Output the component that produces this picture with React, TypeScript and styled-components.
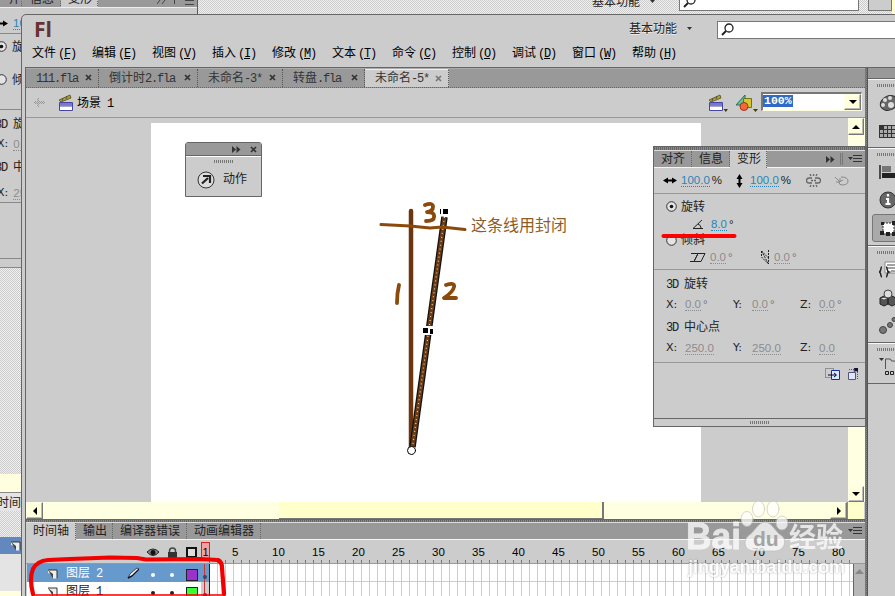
import React from "react";
import styled, { createGlobalStyle, css } from "styled-components";

const Global = createGlobalStyle`
  * { box-sizing: border-box; }
  body { margin: 0; overflow: hidden; }
  svg { display: block; flex: none; }
`;

const hatch = css`
  background-color: #ccc;
  background-image: conic-gradient(#f0f0f0 25%, transparent 0 50%, #f0f0f0 0 75%, transparent 0);
  background-size: 2px 2px;
`;
const hatchYellow = css`
  background-color: #ffffe2;
`;
const dotsDark = css`
  background: repeating-linear-gradient(90deg, #666 0 1px, #8a8a8a 1px 2px);
`;

const Page = styled.div`
  position: relative;
  width: 895px;
  height: 596px;
  overflow: hidden;
  background: #ccc;
  color: #222;
  font: 12px/16px "Noto Sans CJK SC", sans-serif;
  white-space: nowrap;
`;

/* ---------- text helpers ---------- */
const Latin = styled.span`
  font-family: "Liberation Mono", monospace;
  font-size: 12px;
  letter-spacing: -1.2px;
`;
const Mixed = ({ text }: { text: string }) => (
  <span>
    {text.split(/([\x20-\x7e]+)/).map((s, i) => (/^[\x20-\x7e]+$/.test(s) ? <Latin key={i}>{s}</Latin> : s))}
  </span>
);

/* ---------- window behind ---------- */
const BackTop = styled.div`
  position: absolute;
  inset: 0 0 auto 0;
  height: 15px;
  display: flex;
  ${hatch}
`;
const BackPanelTop = styled.div`
  width: 198px;
  flex: none;
  background: #ccc;
  border-right: 1px solid #557;
`;
const BackTabs = styled.div`
  height: 8px;
  display: flex;
  overflow: hidden;
  background: #999;
  border-bottom: 1px solid #eee;
`;
const BackTab = styled.span<{ $w: number; $on?: boolean }>`
  width: ${(p) => p.$w}px;
  height: 18px;
  margin-top: -10px;
  padding-left: ${(p) => (p.$on ? 7 : 8)}px;
  background: ${(p) => (p.$on ? "#ccc" : "none")};
  border-right: 1px dotted #666;
`;
const BackMark = styled.svg`margin-left: 59px;`;
const BackWork = styled.div`
  display: flex;
  width: 303px;
  margin-left: auto;
`;
const BackTitle = styled.span`
  width: 87px;
  flex: none;
  display: flex;
  align-items: center;
  gap: 10px;
  height: 16px;
  margin-top: -7px;
`;
const BackBox = styled.div<{ $w: number; $ml: number; $c: string }>`
  width: ${(p) => p.$w}px;
  flex: none;
  margin-left: ${(p) => p.$ml}px;
  height: 11px;
  padding-left: 3px;
  background: ${(p) => p.$c};
  border: 1px solid #777;
  border-top: 0;
  svg { margin-top: -5px; }
`;
const BackTip = styled.div`
  width: 6px;
  margin-left: auto;
  background: #ffffcc;
`;
const BackLeft = styled.div`
  position: absolute;
  left: 0;
  top: 13px;
  width: 22px;
  height: 583px;
  overflow: hidden;
  display: flex;
  flex-direction: column;
  background: #ccc;
`;
const Strip = styled.div<{ $h: number; $line?: boolean; $bg?: "hatch" | "yellow" | "blue" | "light"; $shift?: number }>`
  height: ${(p) => p.$h}px;
  flex: none;
  display: flex;
  align-items: center;
  gap: 5px;
  border-bottom: ${(p) => (p.$line ? "1px solid #888" : "0")};
  > :first-child { margin-left: ${(p) => p.$shift ?? 0}px; }
  ${(p) => p.$bg === "hatch" && hatch}
  ${(p) => p.$bg === "yellow" && "background: #ffffe0;"}
  ${(p) => p.$bg === "blue" && "background: #6288bd;"}
  ${(p) => p.$bg === "light" && "background: #e4e4e4;"}
`;

/* ---------- front window ---------- */
const Window = styled.div`
  position: absolute;
  left: 21px;
  top: 14px;
  width: 880px;
  height: 590px;
  background: #ccc;
  border: 1px solid #666;
  border-radius: 5px 0 0 0;
  display: flex;
  flex-direction: column;
`;
const TitleRow = styled.div`
  height: 29px;
  display: flex;
  align-items: center;
  padding-left: 12px;
`;
const Logo = styled.span`
  width: 595px;
  flex: none;
  color: #663333;
  font: 700 21px/27px "Open Sans", sans-serif;
`;
const Workspace = styled.span`
  width: 88px;
  flex: none;
  padding-bottom: 3px;
  display: flex;
  align-items: center;
  gap: 10px;
  text-shadow: 0 1px #eee;
`;
const Search = styled.div`
  width: 190px;
  flex: none;
  height: 18px;
  margin-top: 1px;
  padding-left: 3px;
  display: flex;
  align-items: center;
  background: #fff;
  border: 1px solid #777;
`;
const Menu = styled.div`
  height: 23px;
  padding: 0 0 6px 10px;
  display: grid;
  grid-template-columns: repeat(11, 60px);
  align-items: center;
  color: #000;
`;
const Key = styled(Latin)`
  margin-left: 2px;
  u { text-underline-offset: 1px; }
`;
const Body = styled.div`
  flex: 1;
  display: flex;
  margin-left: 3px;
  border-left: 1px solid #666;
  border-top: 1px solid #666;
`;
const Center = styled.div`
  width: 839px;
  flex: none;
  display: flex;
  flex-direction: column;
`;
const Divider = styled.div`
  width: 3px;
  flex: none;
  background: repeating-linear-gradient(0deg, #666 0 1px, #888 1px 2px);
  border-right: 1px solid #555;
  border-left: 1px solid #777;
`;
const DocTabs = styled.div`
  height: 20px;
  display: flex;
  background: #999;
  border-top: 1px solid #aaa;
  border-bottom: 1px dotted #666;
`;
const DocTab = styled.div<{ $w: number; $on?: boolean }>`
  width: ${(p) => p.$w}px;
  padding: 0 6px 1px 10px;
  display: flex;
  align-items: center;
  justify-content: space-between;
  background: ${(p) => (p.$on ? "#ccc" : "#999")};
  border-right: 1px dotted #555;
  border-top: ${(p) => (p.$on ? "1px solid #eee" : "0")};
  color: #333;
`;
const EditBar = styled.div`
  height: 30px;
  padding: 0 3px 0 7px;
  display: flex;
  align-items: center;
  border-bottom: 1px solid #999;
  color: #000;
`;
const SceneName = styled.span`
  flex: 1;
  margin-left: 3px;
`;
const EditIcons = styled.div`
  display: flex;
  gap: 7px;
  margin-right: 3px;
`;
const Zoom = styled.div`
  width: 101px;
  height: 19px;
  margin-top: -3px;
  display: flex;
  justify-content: space-between;
  background: #fff;
  border: 2px solid #777;
  border-right: 1px solid #ffd;
  border-bottom: 1px solid #ffd;
`;
const ZoomValue = styled.span`
  height: 12px;
  margin-top: 1px;
  padding: 0 1px;
  background: #316ac5;
  color: #fff;
  font: 700 11.5px/12px "Liberation Mono", monospace;
`;
const Btn = styled.div<{ $w?: number; $h?: number }>`
  width: ${(p) => p.$w ?? 17}px;
  height: ${(p) => p.$h ?? 17}px;
  flex: none;
  display: flex;
  align-items: center;
  justify-content: center;
  background: #ffffdc;
  border: 1px solid #ffffe8;
  border-right: 1px solid #777;
  border-bottom: 1px solid #777;
  box-shadow: inset -1px -1px #bbb;
`;
const CanvasRow = styled.div`
  height: 384px;
  display: flex;
`;
const Pasteboard = styled.div`
  width: 822px;
  padding: 5px 147px 0 125px;
`;
const Stage = styled.div`
  height: 379px;
  background: #fff;
`;
const VScroll = styled.div`
  width: 17px;
  display: flex;
  flex-direction: column;
  justify-content: space-between;
  ${hatchYellow}
`;
const HScroll = styled.div`
  height: 17px;
  display: flex;
  width: 838px;
  ${hatchYellow}
`;
const Track = styled.div<{ $w: number }>`
  width: ${(p) => p.$w}px;
  flex: none;
`;
const Thumb = styled.div`
  width: 325px;
  flex: none;
  background: #ffffcc;
  border-right: 2px solid #777;
  border-bottom: 1px solid #777;
`;
const Corner = styled.div`
  width: 17px;
  background: #ffffcc;
  border-left: 1px solid #888;
`;
const Splitter = styled.div`
  height: 4px;
  ${dotsDark}
  border-top: 1px solid #666;
  border-bottom: 1px solid #ddd;
`;
const PaneTabs = styled.div`
  height: 17px;
  display: flex;
  background: #999;
  border-bottom: 1px solid #f4f4f4;
`;
const PaneTab = styled.div<{ $w: number; $on?: boolean }>`
  width: ${(p) => p.$w}px;
  height: ${(p) => (p.$on ? 17 : 16)}px;
  padding-left: 7px;
  line-height: 13px;
  background: ${(p) => (p.$on ? "#ccc" : "#999")};
  border-right: 1px dotted #666;
  color: #222;
`;
const TabMenu = styled.div`
  display: flex;
  align-items: center;
  gap: 5px;
  margin: 0 3px 0 auto;
`;
const Ruler = styled.div`
  height: 24px;
  display: flex;
  overflow: hidden;
  border-bottom: 1px solid #999;
  color: #000;
  background: #ccc;
`;
const LayerHead = styled.div`
  width: 175px;
  flex: none;
  padding: 2px 4px 0 0;
  display: flex;
  align-items: center;
  justify-content: flex-end;
  gap: 8px;
`;
const RulerScale = styled.div`
  flex: none;
  display: flex;
  width: 664px;
  background: repeating-linear-gradient(90deg, transparent 0 7px, #777 7px 8px) 1px 100% / 648px 3px no-repeat;
`;
const PlayHead = styled.div`
  width: 9px;
  height: 18px;
  flex: none;
  margin: 2px 22px 0 0;
  background: #f3a0a0;
  border: 1px solid #d22;
  text-align: center;
  font: 11px/19px "Liberation Sans", sans-serif;
`;
const Mark = styled.span`
  width: 40px;
  flex: none;
  padding-top: 4px;
  font: 11.5px/16px "Liberation Sans", sans-serif;
`;
const LayerRow = styled.div<{ $h: number }>`
  height: ${(p) => p.$h}px;
  display: flex;
`;
const LayerInfo = styled.div<{ $on?: boolean }>`
  width: 174px;
  margin-left: 1px;
  padding: 0 5px 2px 21px;
  display: grid;
  grid-template-columns: 18px 61px 21px 19px 19px 12px;
  align-items: center;
  background: ${(p) => (p.$on ? "#6699cc" : "#fff")};
  color: ${(p) => (p.$on ? "#fff" : "#222")};
`;
const Dot = styled.i`
  width: 4px;
  height: 4px;
  margin: 3px 0 0 3px;
  border-radius: 2px;
  background: currentColor;
`;
const Swatch = styled.i<{ $c: string }>`
  width: 12px;
  height: 12px;
  margin-top: 3px;
  border: 1px solid #222;
  background: ${(p) => p.$c};
`;
const KeyFrame = styled.div<{ $on?: boolean }>`
  width: 9px;
  padding: 4px 2px 0 0;
  background: linear-gradient(90deg, transparent 3px, #c33 3px 4px, transparent 4px), ${(p) => (p.$on ? "#6699cc" : "#ccc")};
  border-right: 1px solid #222;
  display: flex;
  align-items: center;
  justify-content: center;
  color: #446;
  i { flex: none; margin: 3px 0 0 2px; }
`;
const Frames = styled.div`
  width: 643px;
  background: repeating-linear-gradient(90deg, #fff 0 7px, #ccc 7px 8px);
  border-bottom: 1px solid #ccc;
`;
const FrameScroll = styled.div`
  width: 12px;
  padding: 4px 1px;
  background: #b8b8b8;
  border-left: 1px solid #666;
`;

/* ---------- dock ---------- */
const Dock = styled.div`
  width: 40px;
  display: flex;
  flex-direction: column;
`;
const DockHead = styled.div`
  height: 11px;
  background: #999;
  border-bottom: 1px solid #666;
`;
const DockGroup = styled.div<{ $h: number }>`
  height: ${(p) => p.$h}px;
  padding: 4px 0 0 9px;
  border-top: 1px solid #f8f8f8;
  border-bottom: 1px solid #666;
`;
const Grip = styled.div<{ $w?: number }>`
  width: ${(p) => p.$w ?? 20}px;
  height: 3px;
  background: repeating-linear-gradient(90deg, #777 0 1px, transparent 1px 2px);
`;
const DockItems = styled.div`
  padding-top: 2px;
`;
const DockItem = styled.div<{ $on?: boolean }>`
  height: 28px;
  margin-left: -5px;
  padding-left: 6px;
  display: flex;
  align-items: center;
  border-radius: 3px 0 0 3px;
  border: ${(p) => (p.$on ? "1px solid #777" : "1px solid transparent")};
  background: ${(p) => (p.$on ? "#aaa" : "none")};
`;

/* ---------- floating panels ---------- */
const ActionPanel = styled.div`
  position: absolute;
  left: 185px;
  top: 142px;
  width: 77px;
  height: 55px;
  background: #ccc;
  border: 1px solid #666;
  border-radius: 3px 3px 0 0;
`;
const ActionHead = styled.div`
  height: 14px;
  padding-right: 4px;
  display: flex;
  align-items: center;
  justify-content: flex-end;
  gap: 9px;
  background: #999;
  border-bottom: 1px solid #fff;
  box-shadow: 0 -1px #666 inset;
`;
const ActionGrip = styled(Grip)`margin: 3px auto 0;`;
const ActionBody = styled.div`
  padding: 7px 0 0 11px;
  display: flex;
  align-items: center;
  gap: 8px;
`;
const ActionLabel = styled.span`
  padding-bottom: 3px;
`;
const Transform = styled.div`
  position: absolute;
  left: 653px;
  top: 146px;
  width: 214px;
  height: 281px;
  background: #ccc;
  border: 1px solid #666;
  border-right-width: 2px;
  display: flex;
  flex-direction: column;
`;
const TransformBar = styled.div`
  height: 4px;
  flex: none;
  ${dotsDark}
  border-bottom: 1px solid #ddd;
`;
const Section = styled.div<{ $h: number }>`
  height: ${(p) => p.$h}px;
  flex: none;
  border-bottom: 1px solid #999;
`;
const Row = styled.div<{ $h: number; $pl?: number }>`
  height: ${(p) => p.$h}px;
  padding-left: ${(p) => p.$pl ?? 12}px;
  display: flex;
  align-items: center;
  gap: 4px;
`;
const Label = styled.span`
  padding-bottom: 2px;
`;
const Num = styled.span<{ $off?: boolean; $w?: number }>`
  display: flex;
  gap: 2px;
  width: ${(p) => (p.$w ? p.$w + "px" : "auto")};
  font: 11.5px/12px "Liberation Sans", sans-serif;
  color: ${(p) => (p.$off ? "#777" : "#222")};
  b {
    font-weight: 400;
    color: ${(p) => (p.$off ? "#8c8c8c" : "#2b84b5")};
    border-bottom: 1px dotted currentColor;
  }
`;
const Axis = styled.span`
  width: 15px;
  font: 11px/12px "DejaVu Sans", sans-serif;
`;
const PanelTools = styled.div`
  height: 55px;
  padding: 5px 6px 0 0;
  display: flex;
  justify-content: flex-end;
  gap: 8px;
`;
const PanelFoot = styled.div`
  height: 8px;
  display: flex;
  align-items: center;
  justify-content: center;
  border-top: 1px solid #666;
`;

/* ---------- overlays ---------- */
const Overlay = styled.svg`
  position: absolute;
  left: 0;
  top: 0;
  pointer-events: none;
`;
const SiteName = styled.text`
  font: 700 19px "Liberation Sans", sans-serif;
  stroke: none;
  filter: drop-shadow(0 0 1px #999);
`;
const Caption = styled.span`
  position: absolute;
  left: 471px;
  top: 213px;
  font: 400 16px/22px "Noto Sans CJK SC", sans-serif;
  color: #8e5c24;
`;

/* ---------- icons ---------- */
const Tri = ({ d }: { d: "up" | "down" | "left" | "right" }) => (
  <svg width="8" height="8" viewBox="0 0 8 8" fill="#000">
    <path d={{ up: "M0 6 4 2 8 6Z", down: "M0 2h8L4 6Z", left: "M6 0v8L2 4Z", right: "M2 0v8L6 4Z" }[d]} />
  </svg>
);
const Small = () => <svg width="5" height="3" viewBox="0 0 5 3"><path d="M0 0h5L2.5 3Z" fill="#333" /></svg>;
const Close = ({ on = false }: { on?: boolean }) => (
  <svg width="7" height="7" viewBox="0 0 7 7" stroke={on ? "#777" : "#333"} strokeWidth="1.7"><path d="M1 1 6 6M6 1 1 6" /></svg>
);
const Glass = () => (
  <svg width="14" height="14" viewBox="0 0 14 14" fill="none" stroke="#222" strokeWidth="1.3">
    <circle cx="8" cy="5" r="4" /><path d="M5 8 1 12" strokeWidth="2" />
  </svg>
);
const MenuIcon = () => (
  <svg width="14" height="8" viewBox="0 0 14 8"><path d="M0 2h5L2.5 5Z" fill="#333" /><path d="M5 .5h9M5 3.5h9M5 6.5h9" stroke="#333" /></svg>
);
const FF = () => <svg width="9" height="7" viewBox="0 0 9 7" fill="#333"><path d="M0 0 4 3.500 0 7ZM4.500 0 8.500 3.500 4.500 7Z" /></svg>;
const Clapper = ({ drop = false }: { drop?: boolean }) => (
  <svg width={drop ? 20 : 16} height="18" viewBox={`0 0 ${drop ? 20 : 16} 18`}>
    <path d="M1 6 12 1l1 3L3 8Z" fill="#aaa035" stroke="#554f10" strokeWidth=".8" />
    <path d="m4 7 1-3m3 1 1-3" stroke="#554" />
    <path d="M1.500 8.500h13v8h-13z" fill="#fff" stroke="#4646a0" /><path d="M2 9h12v2.500H2z" fill="#7777d0" />
    <path d="M2 12h12" stroke="#4646a0" />
    {drop && <path d="M15.500 15h4.500l-2.200 3Z" fill="#443c00" />}
  </svg>
);
const Symbols = () => (
  <svg width="23" height="18" viewBox="0 0 23 18">
    <path d="M1 11 10 1v10Z" fill="#5fc59b" stroke="#22705a" />
    <path d="M8.500 4.500h8v9h-8z" fill="#d4c92c" stroke="#77701a" /><circle cx="9" cy="12.500" r="4" fill="#f26a39" stroke="#a4301b" />
    <path d="M18 15h5l-2.500 3Z" fill="#443c00" />
  </svg>
);
const Back = () => (
  <svg width="13" height="11" viewBox="0 0 13 11" fill="none" stroke="#999" strokeDasharray="1 1"><path d="M1 5.500h11M2 4.500h9M2 6.500h9M5.500 1v9M4.500 2v7" /></svg>
);
const Radio = ({ on = false }: { on?: boolean }) => (
  <svg width="11" height="11" viewBox="0 0 11 11"><circle cx="5.500" cy="5.500" r="4.800" fill="#e4e4e4" stroke="#333" />{on && <circle cx="5.500" cy="5.500" r="1.800" fill="#111" />}</svg>
);
const LayerIcon = () => (
  <svg width="11" height="11" viewBox="0 0 11 11"><path d="M0 2H9V10.500H5L4 6 0 5Z" fill="#eee" /><path d="M0 2h9v8.500" fill="none" stroke="#333" /><path d="M0 2l5 8.500V6Z" fill="#444" /></svg>
);
const Pencil = () => <svg width="12" height="12" viewBox="0 0 12 12"><path d="M1 11 3 7 10 1l2 1-7 7Z" fill="#fff" stroke="#223" strokeWidth=".8" /><path d="m1 11 4-2L12 2" stroke="#112" strokeWidth="1.400" fill="none" /></svg>;

const Arrow = ({ v = false }: { v?: boolean }) => (
  <svg width={v ? 7 : 14} height={v ? 14 : 7} viewBox={v ? "0 0 7 14" : "0 0 14 7"} fill="#000">
    <path d={v ? "M3.500 0 6.500 5H4.500v4h2l-3 5L.5 9h2V5h-2Z" : "M0 3.500 5 .5v2h4v-2l5 3L9 6.500v-2H5v2Z"} />
  </svg>
);
const dockIcons: Record<string, React.ReactNode> = {
  palette: <><ellipse cx="10" cy="9" rx="9" ry="7" fill="#666" stroke="#333" transform="rotate(-25 10 9)" /><g fill="#ddd"><circle cx="6" cy="6" r="2" /><circle cx="11" cy="4" r="2" /><circle cx="4" cy="11" r="2" /><circle cx="12" cy="11" r="3" /></g></>,
  grid: <><path d="M0 3h20v13H0z" fill="#333" /><path d="M5 4h3v3H5zm4 0h3v3H9zm4 0h3v3h-3zM1 8h3v3H1zm4 0h3v3H5zm4 0h3v3H9zm4 0h3v3h-3zM1 12h3v3H1zm4 0h3v3H5zm4 0h3v3H9zm4 0h3v3h-3z" fill="#aaa" /></>,
  align: <><path d="M1 2v14" stroke="#222" strokeWidth="1.500" /><path d="M3 3h9v6H3z" fill="#777" /><path d="M3 10h17v5H3z" fill="#222" /></>,
  info: <><circle cx="9" cy="9" r="8" fill="#666" stroke="#333" /><path d="M9 3v2.500M7 8h2v5m-2.500 0h5" stroke="#fff" strokeWidth="2.200" /></>,
  transform: <><path d="M4 4h11v11H4z" fill="#fff" stroke="#333" strokeDasharray="2 1" /><path d="M1 12h4v4H1zM7 13h4v4H7zM13 2h4v4h-4zm0 11h4v4h-4zM2 3h3v3H2z" fill="#222" /></>,
  code: <><path d="M6 1h14v11H6z" fill="#fff" stroke="#888" /><path d="M8 4h11M8 7h11M12 10h7" stroke="#444" /><path d="M3 6C1 6 3 10 0 11c3 1 1 5 3 5M7 6c2 0 0 4 3 5-3 1-1 5-3 5" stroke="#222" strokeWidth="1.500" fill="none" /></>,
  cubes: <><path d="M1 9l4-2 4 2v6l-4 2-4-2ZM9 9l4-2 4 2v6l-4 2-4-2Z" fill="#555" stroke="#222" /><circle cx="9" cy="5" r="4" fill="#ddd" stroke="#444" /><path d="m2 9 3 1.500L8 9" fill="#eee" /></>,
  motion: <><g fill="#777" stroke="#444"><circle cx="4" cy="13" r="3.500" /><circle cx="11" cy="8" r="2.500" /><circle cx="15" cy="2.500" r="2" /></g></>,
  folder: <><path d="M0 0h5L2.500 3Z" fill="#333" /><path d="M6.500 11V1h5l1 2H20" fill="none" stroke="#555" /><path d="M6.500 13.500h3v3h-3zm5 0h3v3h-3zm5 0h3v3h-3z" fill="none" stroke="#222" /></>,
};
const DockIcon = ({ n }: { n: string }) => <svg width="20" height="19" viewBox="0 0 20 19">{dockIcons[n]}</svg>;

const menus = [["文件", "F"], ["编辑", "E"], ["视图", "V"], ["插入", "I"], ["修改", "M"], ["文本", "T"], ["命令", "C"], ["控制", "O"], ["调试", "D"], ["窗口", "W"], ["帮助", "H"]];
const docs: [string, number][] = [["111.fla", 73], ["倒计时2.fla", 99], ["未命名-3*", 85], ["转盘.fla", 82], ["未命名-5*", 84]];
const dock: { h: number; items: string[] }[] = [
  { h: 69, items: ["palette", "grid"] }, { h: 98, items: ["align", "info", "transform"] },
  { h: 97, items: ["code", "cubes", "motion"] }, { h: 41, items: ["folder"] },
];

const Deg = ({ v, w }: { v: string; w?: number }) => <Num $off $w={w}><b>{v}</b>°</Num>;

export default function App() {
  return (
    <Page>
      <Global />
      <BackTop>
        <BackPanelTop>
          <BackTabs>
            <BackTab $w={22}>齐</BackTab><BackTab $w={39}>信息</BackTab><BackTab $w={37} $on>变形</BackTab>
            <BackMark width="38" height="6" viewBox="0 0 38 6" stroke="#444"><path d="M0 4 3 0M5 4 8 0M17.500 0v4M28 0.500h9M28 4.500h9" /></BackMark>
          </BackTabs>
        </BackPanelTop>
        <BackWork>
          <BackTitle>基本功能<Small /></BackTitle>
          <BackBox $w={180} $ml={0} $c="#fff"><Glass /></BackBox>
          <BackBox $w={24} $ml={9} $c="#ccc" />
          <BackTip />
        </BackWork>
      </BackTop>
      <BackLeft>
        <Strip $h={21} $line $shift={-6}><Arrow /><Num><b>100</b></Num></Strip>
        <Strip $h={24} $shift={-4}><Radio on /><span>旋</span></Strip>
        <Strip $h={42} $shift={-4}><Radio /><span>倾</span></Strip>
        <Strip $h={10} $line />
        <Strip $h={28} $shift={-5}><Mixed text="3D 旋" /></Strip>
        <Strip $h={12} $shift={-3}><Axis>X:</Axis><Deg v="0.0" /></Strip>
        <Strip $h={34} $shift={-5}><Mixed text="3D 中" /></Strip>
        <Strip $h={19} $line $shift={-3}><Axis>X:</Axis><Deg v="250" /></Strip>
        <Strip $h={56} $line />
        <Strip $h={9} $line />
        <Strip $h={206} $bg="hatch" />
        <Strip $h={19} $bg="yellow" $line />
        <Strip $h={18} $bg="light" $shift={-3}><span>时间</span></Strip>
        <Strip $h={26} $bg="hatch" />
        <Strip $h={17} $bg="blue" $shift={11}><LayerIcon /></Strip>
        <Strip $h={37} $bg="light" />
        <Strip $h={10} $bg="yellow" />
      </BackLeft>

      <Window>
        <TitleRow>
          <Logo>Fl</Logo>
          <Workspace>基本功能<Small /></Workspace>
          <Search><Glass /></Search>
        </TitleRow>
        <Menu>{menus.map(([t, k]) => <span key={k}>{t}<Key>(<u>{k}</u>)</Key></span>)}</Menu>
        <Body>
          <Center>
            <DocTabs>
              {docs.map(([t, w], i) => <DocTab key={t} $w={w} $on={i === 4}><Mixed text={t} /><Close on={i === 4} /></DocTab>)}
            </DocTabs>
            <EditBar>
              <Back /><svg width="12" height="1" /><Clapper />
              <SceneName><Mixed text="场景 1" /></SceneName>
              <EditIcons><Clapper drop /><Symbols /></EditIcons>
              <Zoom><ZoomValue>100%</ZoomValue><Btn $w={17} $h={16}><Tri d="down" /></Btn></Zoom>
            </EditBar>
            <CanvasRow>
              <Pasteboard><Stage /></Pasteboard>
              <VScroll><Btn $w={16}><Tri d="up" /></Btn><Btn $w={16} $h={16}><Tri d="down" /></Btn></VScroll>
            </CanvasRow>
            <HScroll>
              <Btn><Tri d="left" /></Btn><Track $w={236} /><Thumb /><Track $w={226} /><Btn><Tri d="right" /></Btn><Corner />
            </HScroll>
            <Splitter />
            <PaneTabs>
              <PaneTab $w={50} $on>时间轴</PaneTab><PaneTab $w={37}>输出</PaneTab><PaneTab $w={74}>编译器错误</PaneTab><PaneTab $w={74}>动画编辑器</PaneTab>
              <TabMenu><MenuIcon /></TabMenu>
            </PaneTabs>
            <Ruler>
              <LayerHead>
                <svg width="12" height="10" viewBox="0 0 12 10"><path d="M0 4Q6-2 12 4 6 11 0 4" fill="#888" stroke="#222" /><circle cx="6" cy="4.500" r="2.500" fill="#111" /></svg>
                <svg width="11" height="12" viewBox="0 0 11 12"><path d="M2.500 6V4a3 3 0 0 1 6 0v2" fill="none" stroke="#444" strokeWidth="1.500" /><path d="M1 5h9v6H1z" fill="#333" /></svg>
                <svg width="11" height="11" viewBox="0 0 11 11"><path d="M1 1h9v9H1z" fill="#ddd" stroke="#111" strokeWidth="2" /></svg>
              </LayerHead>
              <RulerScale>
                <PlayHead>1</PlayHead>
                {Array.from({ length: 16 }, (_, i) => <Mark key={i}>{(i + 1) * 5}</Mark>)}
              </RulerScale>
            </Ruler>
            {[["图层 2", "#9933cc"], ["图层 1", "#33ff33"]].map(([t, c], i) => (
              <LayerRow key={t} $h={18}>
                <LayerInfo $on={i === 0}><LayerIcon /><Mixed text={t} />{i === 0 ? <Pencil /> : <span />}<Dot /><Dot /><Swatch $c={c} /></LayerInfo>
                <KeyFrame $on={i === 0}><Dot /></KeyFrame>
                <Frames />
                <FrameScroll>{i === 0 && <svg width="9" height="6" viewBox="0 0 9 6"><path d="M0 6 4.500 1 9 6Z" fill="#888" /></svg>}</FrameScroll>
              </LayerRow>
            ))}
          </Center>
          <Divider />
          <Dock>
            <DockHead />
            {dock.map((g) => (
              <DockGroup key={g.h} $h={g.h}>
                <Grip />
                <DockItems>{g.items.map((n) => <DockItem key={n} $on={n === "transform"}><DockIcon n={n} /></DockItem>)}</DockItems>
              </DockGroup>
            ))}
          </Dock>
        </Body>
      </Window>

      <ActionPanel>
        <ActionHead><FF /><Close /></ActionHead>
        <ActionGrip />
        <ActionBody>
          <svg width="18" height="18" viewBox="0 0 18 18"><circle cx="9" cy="9" r="8" fill="#ddd" stroke="#333" /><path d="M5 12.500 11 7M6 5h7v7" fill="none" stroke="#222" strokeWidth="2.200" /></svg>
          <ActionLabel>动作</ActionLabel>
        </ActionBody>
      </ActionPanel>

      <Transform>
        <TransformBar />
        <PaneTabs>
          <PaneTab $w={38}>对齐</PaneTab><PaneTab $w={38}>信息</PaneTab><PaneTab $w={37} $on>变形</PaneTab>
          <TabMenu><FF /><svg width="3" height="12"><path d="M.5 0v12M2.500 0v12" stroke="#777" /></svg><MenuIcon /></TabMenu>
        </PaneTabs>
        <Section $h={26}>
          <Row $h={25} $pl={9}>
            <Arrow /><Num $w={51}><b>100.0</b>%</Num><Arrow v /><Num $w={55}><svg width="1" height="1" /><b>100.0</b>%</Num>
            <svg width="15" height="13" viewBox="0 0 15 13" fill="none" stroke="#666"><path d="M6 4H3a2.500 2.500 0 0 0 0 5h3M9 4h3a2.500 2.500 0 0 1 0 5H9M5 6.500h2M8 6.500h2M5 2 4 0M7.500 2V0M10 2l1-2M5 11l-1 2M7.500 11v2M10 11l1 2" strokeWidth="1.300" /></svg>
            <svg width="24" height="12" viewBox="-9 0 24 12" fill="none" stroke="#888"><path d="M1 2l5 5M6 3v4H2M7 2q7 0 7 4t-6 4q-3 0-3-3l4-2" /></svg>
          </Row>
        </Section>
        <Section $h={76}>
          <Row $h={25}><Radio on /><Label>旋转</Label></Row>
          <Row $h={11} $pl={38}>
            <svg width="11" height="9" viewBox="0 0 11 9" fill="none" stroke="#222"><path d="M10 0 1 8.500h10M6 4q3 1 3 4" /></svg>
            <Num><svg width="2" height="1" /><b>8.0</b>°</Num>
          </Row>
          <Row $h={20}><Radio /><Label>倾斜</Label></Row>
          <Row $h={14} $pl={36}>
            <svg width="16" height="9" viewBox="0 0 16 9" fill="none" stroke="#222"><path d="M4 8.500h7l4-8H8ZM0 8.500h5M1 .5h7L4 8.500" /></svg><Deg v="0.0" w={47} />
            <svg width="9" height="15" viewBox="0 0 9 15" fill="none" stroke="#222"><path d="M.5 1v6l7 7V8ZM7.500 0v8M.5 1l7 13" strokeDasharray="2 1" /></svg><Deg v="0.0" />
          </Row>
        </Section>
        <Section $h={93}>
          <Row $h={28}><Mixed text="3D 旋转" /></Row>
          <Row $h={13}><Axis>X:</Axis><Deg v="0.0" w={44} /><Axis>Y:</Axis><Deg v="0.0" w={44} /><Axis>Z:</Axis><Deg v="0.0" /></Row>
          <Row $h={31}><Mixed text="3D 中心点" /></Row>
          <Row $h={12}><Axis>X:</Axis><Num $off $w={44}><b>250.0</b></Num><Axis>Y:</Axis><Num $off $w={44}><b>250.0</b></Num><Axis>Z:</Axis><Num $off><b>0.0</b></Num></Row>
        </Section>
        <PanelTools>
          <svg width="15" height="12" viewBox="0 0 15 12"><path d="M.5.5h8v9h-8z" fill="none" stroke="#555" strokeDasharray="1 1" /><path d="M6.500 2.500h8v9h-8z" fill="#dde6ff" stroke="#113399" /><path d="M3 7h8M9 5l2.500 2L9 9" stroke="#003" fill="none" /></svg>
          <svg width="11" height="12" viewBox="0 0 11 12"><path d="M.5 4.500h7v7h-7z" fill="#dde6ff" stroke="#557" /><path d="M1 1.500h5v3M9.500 4v7" stroke="#557" strokeDasharray="1 1" fill="none" /><path d="M6 0h4v4L8 3 6.500 4Z" fill="#113" /></svg>
        </PanelTools>
        <PanelFoot><Grip /></PanelFoot>
      </Transform>

      <Overlay width="895" height="596" viewBox="0 0 895 596" fill="none" strokeLinecap="round" strokeLinejoin="round">
        <path d="M411 211V447" stroke="#6b3510" strokeWidth="4.500" />
        <path d="M444.500 217 412.500 447" stroke="#111" strokeWidth="6.500" strokeLinecap="butt" />
        <path d="M444.500 217 412.500 447" stroke="#6b3c14" strokeWidth="4" strokeLinecap="butt" />
        <path d="M444.500 217 412.500 447" stroke="#e8cfae" strokeWidth="1.200" strokeLinecap="butt" strokeDasharray="1 3" />
        <g stroke="#8a4a0c">
          <path d="M381 224.500 410 226 430 228 442 227 465 229.500" strokeWidth="3" />
          <path d="M425 205q8-3 8 2 0 4-6 5 8 0 7 5 0 4-8 4M399 285q-2 8-2 18M446 285q9-3 8 2-1 5-10 11h12" strokeWidth="3.800" />
        </g>
        <g fill="#fff"><path d="M440 207h10v9h-10zM422 326h12v9h-12z" /></g>
        <g fill="#000"><path d="M443 209h5v5h-5zM440 209h1v5h-1zM423 328h5v5h-5zM430 329h3v5h-3z" /></g>
        <circle cx="411.500" cy="450.500" r="4" fill="#fff" stroke="#000" />
        <path d="M663.500 236H734.500" stroke="#f00" strokeWidth="4" />
        <path d="M33 594Q29 578 33 569 37 561 48 560L70 559 110 557.500 137 558 146 559.500 200 559 218 560Q222 562 222 568L224 594" stroke="#f20000" strokeWidth="4.200" />
        <path d="M34 595H222" stroke="#f20000" strokeWidth="1.500" />
        <g fill="#fff" opacity=".75" stroke="#bbb" strokeWidth=".8">
          <ellipse cx="747" cy="519" rx="6" ry="7.500" /><ellipse cx="758.500" cy="509" rx="6" ry="8" /><ellipse cx="773" cy="509" rx="6" ry="8" /><ellipse cx="782" cy="523" rx="6" ry="7" />
          <path d="M765 522c7 0 10 10 17 14 5 4 3 14-6 15-8 0-16 0-22 0-8 0-12-8-6-15 6-3 10-14 17-14Z" />
          <text x="686" y="549" fontFamily="Liberation Sans, sans-serif" fontWeight="700" fontSize="36" textLength="55" lengthAdjust="spacingAndGlyphs" stroke="#fff">Bai</text>
          <text x="789" y="547" fontFamily="Noto Sans CJK SC, sans-serif" fontWeight="700" fontSize="27" stroke="none">经验</text>
          <SiteName x="688" y="573" textLength="157" lengthAdjust="spacingAndGlyphs">jingyan.baidu.com</SiteName>
        </g>
        <text x="753" y="546" fontFamily="Liberation Sans, sans-serif" fontWeight="700" fontSize="21" fill="#a4a4a4">du</text>
      </Overlay>
      <Caption>这条线用封闭</Caption>
    </Page>
  );
}
